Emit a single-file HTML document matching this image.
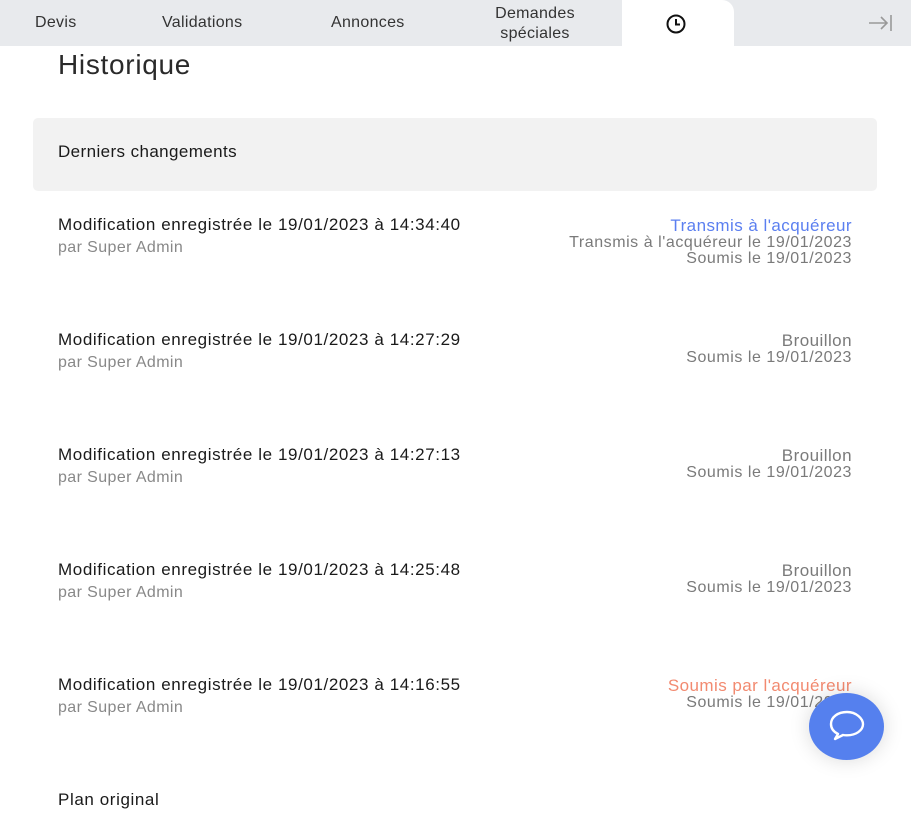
<!DOCTYPE html>
<html><head><meta charset="utf-8"><style>
*{margin:0;padding:0;box-sizing:border-box}
body{width:911px;height:840px;overflow:hidden;background:#fff;font-family:"Liberation Sans",sans-serif;color:#1a1a1a;position:relative}
.nav{position:absolute;left:0;top:0;width:911px;height:46px;background:#e8eaed}
.nav span{position:absolute;font-size:16px;color:#333;text-align:center;line-height:20px;letter-spacing:.3px}
.tab{position:absolute;left:622px;top:0;width:112px;height:47px;background:#fff;border-radius:0 12px 0 0}
h1{position:absolute;left:58px;top:49px;font-size:28px;font-weight:normal;color:#2a2a2a;letter-spacing:.7px}
.box{position:absolute;left:33px;top:118px;width:844px;height:73px;background:#f2f2f2;border-radius:5px}
.box span{position:absolute;left:25px;top:24px;font-size:17px;letter-spacing:.4px}
.row{position:absolute;left:58px;width:794px}
.t{position:absolute;left:0;top:0;font-size:17px;white-space:nowrap;letter-spacing:.6px}
.s{position:absolute;left:0;top:24px;font-size:16px;color:#888;letter-spacing:.4px}
.r{position:absolute;right:0;top:1px;text-align:right;font-size:16px;color:#7a7a7a;line-height:16px;white-space:nowrap;letter-spacing:.55px}
.r .st{font-size:17px;line-height:19px;color:#7a7a7a;letter-spacing:.45px}
.fab{position:absolute;left:809px;top:693px;width:75px;height:67px;border-radius:50%;background:#5580ee;box-shadow:0 0 20px rgba(0,0,0,.15)}
</style></head><body>
<div class="nav">
<span style="left:35px;top:13px">Devis</span>
<span style="left:162px;top:13px">Validations</span>
<span style="left:331px;top:13px">Annonces</span>
<span style="left:487px;top:4px;width:96px">Demandes spéciales</span>
<div class="tab"><svg style="position:absolute;left:43px;top:13px" width="22" height="22" viewBox="0 0 22 22"><circle cx="11" cy="11" r="8.5" fill="none" stroke="#111" stroke-width="2"/><path d="M11 6v5.5h4" fill="none" stroke="#111" stroke-width="2"/></svg></div>
<svg style="position:absolute;left:867px;top:14px" width="26" height="18" viewBox="0 0 26 18"><path d="M2 9h18M14 3l6 6-6 6M24 1v16" fill="none" stroke="#999" stroke-width="1.6"/></svg>
</div>
<h1>Historique</h1>
<div class="box"><span>Derniers changements</span></div>

<div class="row" style="top:215px"><div class="t">Modification enregistrée le 19/01/2023 à 14:34:40</div><div class="s">par Super Admin</div>
<div class="r"><div class="st" style="color:#5b7ff0">Transmis à l'acquéreur</div>Transmis à l'acquéreur le 19/01/2023<br>Soumis le 19/01/2023</div></div>

<div class="row" style="top:330px"><div class="t">Modification enregistrée le 19/01/2023 à 14:27:29</div><div class="s">par Super Admin</div>
<div class="r"><div class="st">Brouillon</div>Soumis le 19/01/2023</div></div>

<div class="row" style="top:445px"><div class="t">Modification enregistrée le 19/01/2023 à 14:27:13</div><div class="s">par Super Admin</div>
<div class="r"><div class="st">Brouillon</div>Soumis le 19/01/2023</div></div>

<div class="row" style="top:560px"><div class="t">Modification enregistrée le 19/01/2023 à 14:25:48</div><div class="s">par Super Admin</div>
<div class="r"><div class="st">Brouillon</div>Soumis le 19/01/2023</div></div>

<div class="row" style="top:675px"><div class="t">Modification enregistrée le 19/01/2023 à 14:16:55</div><div class="s">par Super Admin</div>
<div class="r"><div class="st" style="color:#f28a70">Soumis par l'acquéreur</div>Soumis le 19/01/2023</div></div>

<div class="row" style="top:790px"><div class="t">Plan original</div></div>

<div class="fab"><svg style="position:absolute;left:19px;top:16px" width="38" height="34" viewBox="0 0 38 34"><path d="M19 3C10 3 3 8 3 15c0 5 3 8 7 10l-3 5 8-4c1 .2 3 .3 4 .3 9 0 16-5 16-11S28 3 19 3z" fill="none" stroke="#fff" stroke-width="2.4" stroke-linejoin="round"/></svg></div>
</body></html>
